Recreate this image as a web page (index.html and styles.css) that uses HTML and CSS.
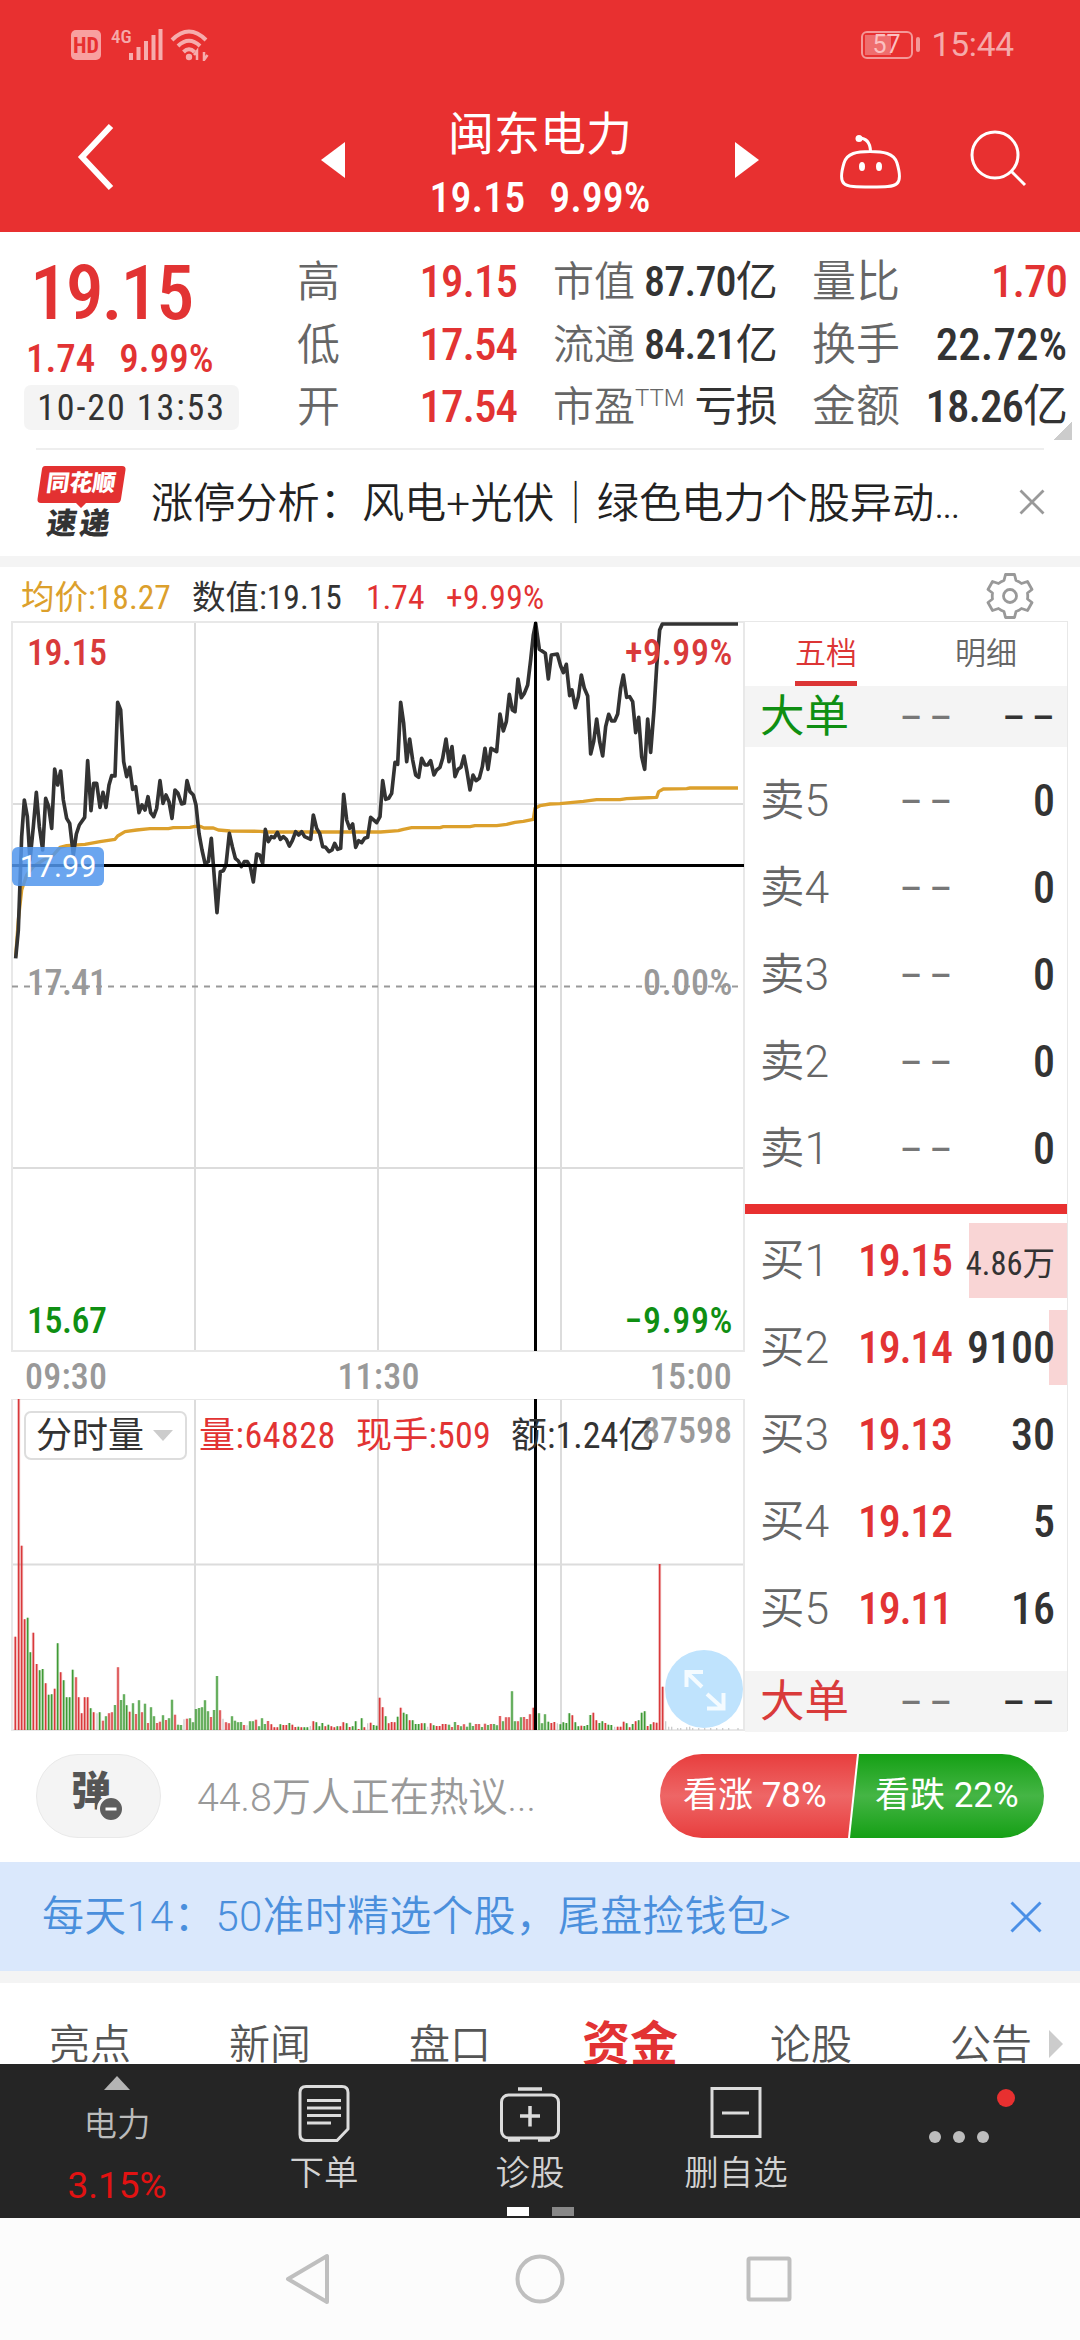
FILE: index.html
```
<!DOCTYPE html>
<html lang="zh-CN">
<head>
<meta charset="utf-8">
<title>闽东电力</title>
<link rel="stylesheet" href="styles.css">
</head>
<body>
<div class="screen">

<header class="header">
  <div class="status">
    <div class="status-left">
      <span class="hd">HD</span>
      <span class="net">4G</span>
      <svg class="signal" width="34" height="32" viewBox="0 0 34 32"><path d="M2 32V25M9.500 32V19M17 32V13M24.500 32V7M31.500 32V1" stroke="currentColor" stroke-width="4"/></svg>
      <svg class="wifi" width="40" height="32" viewBox="0 0 40 32" fill="none" stroke="currentColor" stroke-width="4"><path d="M2 11Q19 -6 36 11M8 17Q19 6.500 30 17M13.500 23Q19 17.500 24.500 23"/><circle cx="19" cy="28" r="3.200" fill="currentColor" stroke="none"/><path d="M27 31v-9l-3 4M34 23v8l3.500-5" stroke-width="2.500"/></svg>
    </div>
    <div class="status-right">
      <span class="battery"><span class="battery-fill"></span><span class="battery-text">57</span></span><span class="battery-cap"></span>
      <span class="clock">15:44</span>
    </div>
  </div>
  <div class="titlebar">
    <svg class="back" width="40" height="74" viewBox="0 0 40 74" fill="none" stroke="#fff" stroke-width="6"><path d="M35 6L6 37L35 68"/></svg>
    <svg class="tri-l" width="24" height="36" viewBox="0 0 24 36"><path d="M24 0V36L0 18z" fill="#fff"/></svg>
    <div class="title">
      <div class="name">闽东电力</div>
      <div class="sub"><span>19.15</span><span>9.99%</span></div>
    </div>
    <svg class="tri-r" width="24" height="36" viewBox="0 0 24 36"><path d="M0 0V36L24 18z" fill="#fff"/></svg>
    <svg class="robot" width="64" height="56" viewBox="0 0 64 56" fill="none" stroke="#fff" stroke-width="3"><path d="M20 5C27 5 31 9 31.500 18M31 18.500C44 18.500 55 20 58 30C61 40 62 47 58 50.500C54 54 46 54 32 54C18 54 8 54 5 50.500C1 47 2 40 5 30C8 20 18 18.500 31 18.500z"/><circle cx="20" cy="5.500" r="3.500" fill="#fff" stroke="none"/><ellipse cx="23" cy="33.500" rx="3" ry="4.500" fill="#fff" stroke="none"/><ellipse cx="40" cy="33.500" rx="3" ry="4.500" fill="#fff" stroke="none"/></svg>
    <svg class="search" width="58" height="58" viewBox="0 0 58 58" fill="none" stroke="#fff" stroke-width="3"><circle cx="25" cy="25" r="23"/><path d="M41 41L55 55"/></svg>
  </div>
</header>

<section class="quote">
  <div class="q-main">
    <div class="price">19.15</div>
    <div class="change"><span>1.74</span><span>9.99%</span></div>
    <div class="stamp">10-20 13:53</div>
  </div>
  <dl class="stats stats-a">
    <div><dt>高</dt><dd class="up">19.15</dd></div>
    <div><dt>低</dt><dd class="up">17.54</dd></div>
    <div><dt>开</dt><dd class="up">17.54</dd></div>
  </dl>
  <dl class="stats stats-b">
    <div><dt>市值</dt><dd>87.70<em>亿</em></dd></div>
    <div><dt>流通</dt><dd>84.21<em>亿</em></dd></div>
    <div><dt>市盈<sup>TTM</sup></dt><dd><em>亏损</em></dd></div>
  </dl>
  <dl class="stats stats-c">
    <div><dt>量比</dt><dd class="up">1.70</dd></div>
    <div><dt>换手</dt><dd class="ratio">22.72%</dd></div>
    <div><dt>金额</dt><dd>18.26<em>亿</em></dd></div>
  </dl>
  <span class="corner"></span>
</section>

<section class="news">
  <div class="logo">
    <svg class="logo-bg" width="90" height="45" viewBox="0 0 90 45"><path d="M8 0H85Q89 0 88.500 4L84 33Q83.500 37 80 37H49L44 42L39 37H4Q0 37 .5 33L5 3Q5.500 0 8 0z" fill="#e33131"/></svg>
    <span class="logo-top">同花顺</span>
    <span class="logo-bottom">速递</span>
  </div>
  <p class="news-text">涨停分析：风电+光伏｜绿色电力个股异动<span class="dots">...</span></p>
  <svg class="news-close" width="26" height="26" viewBox="0 0 26 26" stroke="#999" stroke-width="2.800"><path d="M1.500 1.500L24.500 24.500M24.500 1.500L1.500 24.500"/></svg>
</section>

<section class="market">
  <div class="legend">
    <span class="avg">均价:18.27</span><span class="val">数值:19.15</span><span class="up chg">1.74</span><span class="up pct">+9.99%</span>
    <svg class="gear" width="48" height="48" viewBox="-24 -24 48 48" fill="none" stroke="#999" stroke-width="2.800" stroke-linejoin="round"><path d="M-4.500 -21.500H4.500L6 -15.500Q9 -14.500 11.500 -12.500L17.500 -14.500L22 -6.500L17.500 -3Q18 0 17.500 3L22 6.500L17.500 14.500L11.500 12.500Q9 14.500 6 15.500L4.500 21.500H-4.500L-6 15.500Q-9 14.500 -11.500 12.500L-17.500 14.500L-22 6.500L-17.500 3Q-18 0 -17.500 -3L-22 -6.500L-17.500 -14.500L-11.500 -12.500Q-9 -14.500 -6 -15.500z"/><circle r="6.500"/></svg>
  </div>
  <div class="panels">
    <div class="charts">
      <div class="chart price-chart">
        <svg width="734" height="731" viewBox="11 621 734 731">
          <path d="M195 621V1351M378 621V1351M561 621V1351M12 804H744M12 1168H744" stroke="#dcdcdc" stroke-width="2"/>
          <path d="M12 622H744V1351H12z" fill="none" stroke="#e8e8e8" stroke-width="2"/>
          <path d="M12 986.500H738" stroke="#999" stroke-width="1.800" stroke-dasharray="6 6"/>
          <g transform="translate(0 560) scale(.33333)" fill="none" stroke-linejoin="round">
            <polyline stroke="#dca02c" stroke-width="10" points="47,1190 55,1080 65,990 80,945 100,920 130,900 160,885 180,862 200,857 255,853 300,845 345,838 353,828 375,815 410,810 450,806 505,806 520,803 570,802 585,799 600,799 612,804 640,804 655,810 690,813 780,814 800,816 1142,816 1195,812 1210,808 1235,803 1320,803 1330,800 1410,800 1425,797 1490,797 1520,793 1545,787 1570,784 1600,778 1605,745 1620,737 1650,732 1680,731 1750,724 1790,719 1860,719 1880,716 1925,714 1970,712 1976,695 1990,687 2060,686 2070,684 2214,684"/>
            <polyline stroke="#333" stroke-width="11" points="47,1195 55,1110 65,830 73,720 82,770 90,900 100,800 109,697 118,800 128,870 137,715 146,740 155,805 164,627 173,675 182,633 190,720 200,775 209,790 220,885 229,822 238,795 254,772 263,602 273,752 281,670 290,670 300,742 309,697 318,742 327,675 335,647 345,648 353,427 362,450 371,605 380,650 389,622 398,688 407,680 417,758 426,735 435,750 444,710 452,758 461,770 470,745 480,662 489,730 498,705 507,725 516,775 525,690 534,700 545,732 553,730 561,662 570,695 580,705 588,735 597,820 606,870 615,910 625,905 634,835 651,1058 661,935 670,932 678,915 688,820 697,860 706,895 715,903 724,920 733,905 742,905 751,920 760,966 770,882 779,885 788,910 796,808 805,845 814,830 823,833 832,817 841,838 850,830 859,838 868,858 877,842 887,815 896,825 905,815 914,830 932,838 940,765 950,805 959,820 968,860 977,862 987,875 996,870 1004,850 1013,868 1022,865 1031,703 1040,780 1049,805 1058,792 1067,862 1076,842 1085,848 1094,835 1103,832 1112,772 1130,788 1140,770 1148,662 1157,718 1166,715 1175,700 1185,607 1193,613 1202,427 1211,490 1220,605 1229,537 1238,600 1247,645 1256,652 1265,595 1275,615 1283,615 1292,602 1302,645 1310,630 1320,622 1328,595 1338,537 1347,605 1356,560 1365,650 1374,628 1383,622 1392,588 1401,635 1410,690 1419,645 1428,662 1438,655 1447,620 1455,565 1464,628 1473,565 1490,575 1500,462 1510,513 1519,485 1528,403 1537,450 1545,455 1554,357 1564,413 1573,400 1583,375 1592,300 1600,225 1607,190 1618,268 1636,280 1645,357 1654,285 1672,282 1682,318 1690,338 1699,313 1709,407 1716,390 1726,443 1735,410 1744,345 1753,385 1763,408 1772,582 1781,545 1790,477 1799,545 1808,588 1817,500 1826,463 1835,483 1844,483 1853,462 1862,385 1870,345 1880,412 1889,410 1898,425 1907,518 1916,472 1925,590 1934,628 1943,477 1952,577 1962,450 1970,320 1979,210 1987,192 2214,192"/>
          </g>
          <path d="M12 865.500H744M535.500 622V1351" stroke="#000" stroke-width="3"/>
        </svg>
        <span class="mark m-tl up">19.15</span><span class="mark m-tr up">+9.99%</span>
        <span class="mark m-ml">17.41</span><span class="mark m-mr">0.00%</span>
        <span class="mark m-bl down">15.67</span><span class="mark m-br down">−9.99%</span>
        <span class="tag">17.99</span>
      </div>
      <div class="axis"><span>09:30</span><span>11:30</span><span>15:00</span></div>
      <div class="chart volume-chart">
        <svg width="734" height="332" viewBox="11 1399 734 332">
          <path d="M195 1399V1730M378 1399V1730M561 1399V1730M12 1564.500H744" stroke="#dcdcdc" stroke-width="2"/>
          <path d="M12 1399H744V1730H12z" fill="none" stroke="#e8e8e8" stroke-width="2"/>
          <g transform="translate(0 1280) scale(.33333)" stroke-width="4">
            <g stroke="#ccc"><path d="M291 1350V1300M552 1350V1318M669 1350V1316M741 1350V1336M931 1350V1338M1103 1350V1330M1283 1350V1340M1672 1350V1330M1844 1350V1340M1997 1350V1324M2006 1350V1340M2015 1350V1340M2033 1350V1344M2042 1350V1344M2060 1350V1342M2069 1350V1340M2078 1350V1344M2096 1350V1344M2114 1350V1344M2132 1350V1344M2150 1350V1344M2168 1350V1344M2186 1350V1344M2214 1350V1344"/></g>
            <path id="vr" stroke="#d9393b" d="M46 1350V1070M56 1350V357M65 1350V797M74 1350V1018M100 1350V1058M110 1350V1152M137 1350V1210M164 1350V1226M182 1350V1177M228 1350V1192M236 1350V1252M245 1350V1300M254 1350V1252M263 1350V1252M281 1350V1297M309 1350V1322M327 1350V1300M336 1350V1297M354 1350V1162M389 1350V1295M408 1350V1302M426 1350V1297M444 1350V1329M471 1350V1329M480 1350V1325M498 1350V1320M525 1350V1304M561 1350V1316M633 1350V1311M660 1350V1291M678 1350V1327M687 1350V1330M732 1350V1335M768 1350V1319M804 1350V1323M814 1350V1333M823 1350V1342M832 1350V1342M850 1350V1335M859 1350V1335M877 1350V1334M886 1350V1341M904 1350V1342M940 1350V1324M976 1350V1339M994 1350V1339M1003 1350V1342M1021 1350V1339M1030 1350V1327M1049 1350V1341M1076 1350V1347M1093 1350V1342M1112 1350V1328M1139 1350V1253M1148 1350V1282M1166 1350V1330M1175 1350V1326M1184 1350V1327M1202 1350V1283M1229 1350V1321M1265 1350V1330M1292 1350V1330M1310 1350V1338M1319 1350V1338M1328 1350V1332M1337 1350V1332M1356 1350V1341M1374 1350V1335M1392 1350V1333M1428 1350V1332M1437 1350V1332M1455 1350V1331M1473 1350V1332M1500 1350V1308M1518 1350V1312M1527 1350V1312M1554 1350V1324M1572 1350V1311M1581 1350V1317M1590 1350V1303M1600 1350V1283M1654 1350V1329M1663 1350V1326M1717 1350V1306M1744 1350V1337M1780 1350V1298M1789 1350V1321M1816 1350V1329M1853 1350V1340M1862 1350V1340M1871 1350V1325M1889 1350V1342M1907 1350V1324M1943 1350V1338M1961 1350V1327M1970 1350V1328M1979 1350V852M1988 1350V1220"/>
            <path id="vg" stroke="#3f9a35" d="M83 1350V1013M91 1350V1117M119 1350V1171M128 1350V1167M146 1350V1244M155 1350V1243M173 1350V1090M191 1350V1201M200 1350V1252M209 1350V1252M218 1350V1169M272 1350V1285M299 1350V1297M318 1350V1309M345 1350V1275M363 1350V1260M372 1350V1243M380 1350V1276M399 1350V1270M417 1350V1261M435 1350V1271M453 1350V1282M462 1350V1309M489 1350V1306M507 1350V1315M516 1350V1259M534 1350V1334M543 1350V1335M570 1350V1315M579 1350V1327M588 1350V1287M597 1350V1284M606 1350V1282M615 1350V1261M624 1350V1294M642 1350V1290M651 1350V1188M696 1350V1309M705 1350V1322M714 1350V1327M723 1350V1326M750 1350V1324M759 1350V1324M777 1350V1339M786 1350V1315M795 1350V1332M841 1350V1333M868 1350V1329M895 1350V1340M913 1350V1342M922 1350V1342M949 1350V1327M958 1350V1339M967 1350V1329M985 1350V1334M1012 1350V1339M1040 1350V1330M1058 1350V1339M1067 1350V1324M1085 1350V1315M1121 1350V1335M1130 1350V1337M1157 1350V1309M1193 1350V1310M1211 1350V1298M1220 1350V1303M1238 1350V1321M1247 1350V1332M1256 1350V1332M1274 1350V1330M1301 1350V1336M1347 1350V1334M1365 1350V1326M1383 1350V1339M1401 1350V1340M1410 1350V1328M1419 1350V1338M1446 1350V1341M1464 1350V1335M1482 1350V1332M1491 1350V1336M1509 1350V1324M1536 1350V1234M1545 1350V1324M1563 1350V1312M1617 1350V1300M1626 1350V1330M1635 1350V1303M1645 1350V1325M1681 1350V1333M1690 1350V1327M1699 1350V1329M1708 1350V1300M1726 1350V1327M1735 1350V1339M1753 1350V1338M1762 1350V1335M1771 1350V1305M1798 1350V1329M1807 1350V1324M1825 1350V1334M1834 1350V1335M1880 1350V1330M1898 1350V1332M1916 1350V1321M1925 1350V1298M1934 1350V1294M1952 1350V1333"/>
            <g stroke-width="9" opacity=".35"><use href="#vr"/><use href="#vg"/></g>
          </g>
          <path d="M535.500 1399V1730" stroke="#000" stroke-width="3"/>
        </svg>
        <span class="mark v-max">87598</span>
        <div class="vol-legend">
          <span class="picker">分时量<i></i></span>
          <span class="up v1">量:64828</span><span class="up v2">现手:509</span><span class="v3">额:1.24亿</span>
        </div>
        <svg class="expand" width="78" height="78" viewBox="0 0 78 78" fill="none"><circle cx="39" cy="39" r="39" fill="#bfe3fd"/><path d="M37 37L22 22.500M21.500 37V22H38M42 44L58 58.500M58.500 43V58.500H42" stroke="#f4fbff" stroke-width="4"/></svg>
      </div>
    </div>
    <div class="book">
      <div class="book-tabs"><span class="on">五档</span><span>明细</span></div>
      <div class="big big-sell"><span class="lab">大单</span><span class="pr none">––</span><span class="qt none">––</span></div>
      <div class="levels sells">
        <div class="lv"><span class="lab">卖5</span><span class="pr none">––</span><span class="qt">0</span></div>
        <div class="lv"><span class="lab">卖4</span><span class="pr none">––</span><span class="qt">0</span></div>
        <div class="lv"><span class="lab">卖3</span><span class="pr none">––</span><span class="qt">0</span></div>
        <div class="lv"><span class="lab">卖2</span><span class="pr none">––</span><span class="qt">0</span></div>
        <div class="lv"><span class="lab">卖1</span><span class="pr none">––</span><span class="qt">0</span></div>
      </div>
      <div class="split"></div>
      <div class="levels buys">
        <div class="lv depth-1"><span class="lab">买1</span><span class="pr up">19.15</span><span class="qt small">4.86万</span></div>
        <div class="lv depth-2"><span class="lab">买2</span><span class="pr up">19.14</span><span class="qt">9100</span></div>
        <div class="lv"><span class="lab">买3</span><span class="pr up">19.13</span><span class="qt">30</span></div>
        <div class="lv"><span class="lab">买4</span><span class="pr up">19.12</span><span class="qt">5</span></div>
        <div class="lv"><span class="lab">买5</span><span class="pr up">19.11</span><span class="qt">16</span></div>
      </div>
      <div class="big big-buy"><span class="lab">大单</span><span class="pr none">––</span><span class="qt none">––</span></div>
    </div>
  </div>
</section>

<section class="talk">
  <div class="danmu"><span>弹</span><svg width="28" height="28" viewBox="0 0 28 28"><circle cx="14" cy="14" r="12.500" fill="#5e5e5e" stroke="#f4f4f4" stroke-width="3"/><path d="M8.500 14H19.500" stroke="#fff" stroke-width="3"/></svg></div>
  <p class="talk-text">44.8万人正在热议...</p>
  <div class="vote"><span class="vote-up">看涨 78%</span><span class="vote-down">看跌 22%</span></div>
</section>

<section class="banner">
  <p>每天14：50准时精选个股，尾盘捡钱包&gt;</p>
  <svg width="32" height="32" viewBox="0 0 32 32" stroke="#4a8fe6" stroke-width="3"><path d="M1.500 1.500L30.500 30.500M30.500 1.500L1.500 30.500"/></svg>
</section>

<nav class="tabs">
  <span>亮点</span><span>新闻</span><span>盘口</span><span class="on">资金</span><span>论股</span><span>公告</span>
  <svg width="15" height="28" viewBox="0 0 15 28"><path d="M1 0V28L15 14z" fill="#ccc"/></svg>
</nav>

<footer class="toolbar">
  <div class="tool t1"><svg width="26" height="14" viewBox="0 0 26 14"><path d="M13 0L26 14H0z" fill="#b4b4b4"/></svg><span>电力</span><b>3.15%</b></div>
  <div class="tool"><svg width="54" height="60" viewBox="0 0 54 60" fill="none" stroke="#dcdcdc" stroke-width="3"><path d="M9 3.500H45Q51 3.500 51 9.500V46L40 57.500H9Q3 57.500 3 51.500V9.500Q3 3.500 9 3.500zM10 17.500H44M10 25H44M10 32.500H44M10 40H34"/></svg><span>下单</span></div>
  <div class="tool"><svg width="60" height="60" viewBox="0 0 60 60" fill="none" stroke="#dcdcdc" stroke-width="3"><rect x="1.500" y="12" width="57" height="43" rx="7"/><path d="M18 6H42M8 57H20M38 57H50M20 33H40M30 23V43.500" stroke-width="3.500"/></svg><span>诊股</span></div>
  <div class="tool"><svg width="54" height="60" viewBox="0 0 54 60" fill="none" stroke="#dcdcdc" stroke-width="3"><rect x="3" y="5.500" width="48" height="48"/><path d="M13 30H40"/></svg><span>删自选</span></div>
  <div class="tool more"><svg width="84" height="60" viewBox="0 0 84 60"><circle cx="20" cy="54" r="6" fill="#bdbdbd"/><circle cx="44" cy="54" r="6" fill="#bdbdbd"/><circle cx="68" cy="54" r="6" fill="#bdbdbd"/></svg><i></i></div>
  <div class="pager"><i class="on"></i><i></i></div>
</footer>

<div class="navbar">
  <svg width="48" height="56" viewBox="0 0 48 56" fill="none" stroke="#bfbfbf" stroke-width="4" stroke-linejoin="round"><path d="M43 5V51L4 28z"/></svg>
  <svg width="50" height="50" viewBox="0 0 50 50" fill="none" stroke="#bfbfbf" stroke-width="4"><circle cx="25" cy="25" r="22.500"/></svg>
  <svg width="46" height="46" viewBox="0 0 46 46" fill="none" stroke="#bfbfbf" stroke-width="4"><rect x="2.500" y="2.500" width="41" height="41" rx="1.500"/></svg>
</div>
</div>
</body>
</html>
```
FILE: styles.css
```
* { box-sizing: border-box; margin: 0; padding: 0; }
body {
  width: 1080px;
  background: #fff;
  color: #333;
  font-family: "Roboto", "Noto Sans CJK SC", sans-serif;
}
.screen { display: flex; flex-direction: column; width: 1080px; height: 2340px; overflow: hidden; }
svg { display: block; flex: none; }
i, b, em { font-style: normal; font-weight: 400; }
.up { color: #e23333; }
.down { color: #0f8f12; }

/* header */
.header { height: 232px; background: #e83030; color: #fff; }
.status { display: flex; justify-content: space-between; height: 88px; padding: 29px 66px 0 71px; color: rgba(255, 255, 255, .6); }
.status-left, .status-right { display: flex; align-items: flex-start; }
.hd { width: 30px; height: 30px; margin-top: 1px; border-radius: 5px; background: #f8a0a0; color: #e83030; font: 700 22px/31px "Roboto Condensed", sans-serif; text-align: center; }
.net { width: 18px; margin-left: 10px; font: 500 19px/16px "Roboto Condensed", sans-serif; }
.signal { margin: -1px 0 0 0; }
.wifi { margin: 0 0 0 7px; }
.battery { position: relative; width: 52px; height: 28px; margin-top: 2px; border: 2px solid rgba(255, 255, 255, .5); border-radius: 6px; text-align: center; }
.battery-fill { position: absolute; left: 2px; top: 2px; width: 26px; height: 20px; background: rgba(255, 255, 255, .3); }
.battery-text { position: relative; font: 400 25px/24px "Roboto", sans-serif; color: #fbc0c0; display: block; }
.battery-cap { width: 4px; height: 15px; margin: 8px 12px 0 3px; background: rgba(255, 255, 255, .5); border-radius: 2px; }
.clock { font-size: 33.500px; line-height: 32px; letter-spacing: -.2px; }

.titlebar { display: flex; align-items: flex-start; height: 144px; }
.back { margin: 32px 0 0 76px; }
.tri-l { margin: 54px 0 0 205px; }
.title { width: 390px; padding-top: 16px; text-align: center; }
.name { font-size: 46px; line-height: 60px; }
.sub { display: flex; justify-content: center; gap: 24px; margin-top: 9px; font: 500 42px/50px "Roboto Condensed", sans-serif; }
.tri-r { margin-top: 54px; }
.robot { margin: 45px 0 0 80px; }
.search { margin: 42px 0 0 67px; }

/* quote */
.quote { position: relative; display: flex; height: 216px; padding-top: 19px; font-family: "Roboto Condensed", "Noto Sans CJK SC", sans-serif; }
.q-main { width: 297px; padding-left: 24px; color: #e23333; font-weight: 500; }
.price { padding-left: 6px; margin-top: 7px; font-size: 76px; line-height: 70px; letter-spacing: -2.200px; }
.change { display: flex; gap: 24px; padding-left: 2px; margin-top: 8px; font-size: 39px; line-height: 46px; }
.stamp { width: 215px; height: 45px; margin-top: 3px; border-radius: 7px; background: #f4f4f4; color: #333; font-size: 36px; line-height: 46px; letter-spacing: 1.900px; text-align: center; font-weight: 450; }
.stats > div { display: flex; justify-content: space-between; height: 62.500px; line-height: 62px; white-space: nowrap; }
.stats dt { color: #666; font-weight: 350; }
.stats dd { font-weight: 500; font-size: 45px; letter-spacing: -1px; }
.stats dd.ratio { letter-spacing: 0; }
.stats em { font-weight: 400; }
.stats-a { width: 220px; font-size: 43px; }
.stats-b { width: 224px; margin-left: 36px; font-size: 41px; }
.stats-b dd { font-size: 42px; letter-spacing: -.800px; }
.stats-c { width: 255px; margin-left: 35px; font-size: 44px; }
.stats sup { display: inline-block; vertical-align: top; font: 300 24px/44px "Roboto", sans-serif; }
.corner { position: absolute; right: 8px; bottom: 8px; width: 18px; height: 18px; background: linear-gradient(135deg, transparent 50%, #ccc 50%); }

/* news */
.news { display: flex; align-items: flex-start; height: 108px; margin: 0 36px; border-top: 2px solid #eee; }
.logo { position: relative; width: 90px; height: 76px; margin-top: 16px; }
.logo-bg { position: absolute; left: 1px; top: 0; }
.logo-top, .logo-bottom { position: relative; display: block; transform: skewX(-8deg); font-weight: 900; text-align: center; }
.logo-top { color: #fff; font-size: 23px; line-height: 36px; }
.logo-bottom { margin-top: 7px; padding-right: 2px; font-size: 30px; line-height: 30px; letter-spacing: 3px; }
.news-text { padding-left: 25px; font-size: 42.200px; line-height: 108px; font-weight: 350; white-space: nowrap; color: #222; }
.dots { letter-spacing: -2px; }
.news-close { margin: 39px -1px 0 auto; }

/* market */
.market { border-top: 11px solid #f4f4f4; }
.legend { display: flex; height: 54px; padding-left: 21px; font: 400 33.500px/61px "Roboto Condensed", "Noto Sans CJK SC", sans-serif; white-space: nowrap; position: relative; }
.avg { width: 171px; color: #dca02c; }
.val { width: 174px; }
.chg { width: 80px; font-weight: 450; }
.pct { width: 540px; font-weight: 450; letter-spacing: .400px; }
.gear { margin-top: 5px; }
.panels { display: flex; height: 1110px; padding-left: 11px; }
.charts { width: 734px; }
.chart { position: relative; }
.price-chart { height: 731px; }
.mark { position: absolute; font: 470 36px/36px "Roboto Condensed", sans-serif; color: #999; white-space: nowrap; }
.mark.up { color: #d93a3a; }
.mark.down { color: #0f8f12; }
.m-tl, .m-ml, .m-bl { left: 16px; letter-spacing: -.500px; }
.m-tr, .m-mr, .m-br { right: 12px; letter-spacing: .600px; }
.m-tl, .m-tr { top: 14px; }
.m-ml, .m-mr { top: 344px; }
.m-bl, .m-br { top: 682px; }
.tag { position: absolute; left: 1px; top: 226px; width: 92px; height: 39px; border-radius: 6px; background: rgba(82, 150, 236, .86); color: #fff; font-size: 30.500px; line-height: 39px; text-align: center; }
.axis { display: flex; justify-content: space-between; height: 47px; padding: 0 13px 0 14px; font: 470 36px/50px "Roboto Condensed", sans-serif; letter-spacing: .200px; color: #999; }
.volume-chart { height: 332px; }
.v-max { right: 13px; top: 14px; }
.vol-legend { position: absolute; left: 13px; top: 12px; display: flex; font: 400 36px/50px "Roboto Condensed", "Noto Sans CJK SC", sans-serif; white-space: nowrap; }
.picker { display: flex; align-items: center; width: 163px; height: 49px; padding-left: 10px; border: 2px solid #ddd; border-radius: 7px; background: #fff; }
.picker i { margin-left: 9px; border: 10px solid transparent; border-top: 11px solid #ccc; border-bottom: 0; }
.vol-legend .v1 { width: 157px; margin-left: 12px; letter-spacing: .500px; }
.vol-legend .v2 { width: 155px; letter-spacing: .200px; }
.expand { position: absolute; right: 2px; bottom: 3px; }

/* order book */
.book { width: 323px; border: 1px solid #e8e8e8; border-left: 0; font-family: "Roboto Condensed", "Noto Sans CJK SC", sans-serif; }
.book-tabs { display: flex; height: 64px; padding: 0 50px; justify-content: space-between; font-size: 31px; line-height: 63px; color: #666; font-weight: 350; }
.book-tabs .on { height: 64px; border-bottom: 5px solid #dc3535; color: #dc3535; }
.book-tabs span { height: 64px; }
.big, .lv { display: flex; align-items: center; padding: 0 12px 0 15px; white-space: nowrap; }
.big { height: 61px; background: #f4f4f4; }
.lab { width: 98px; font: 350 44.500px/60px "Roboto", "Noto Sans CJK SC", sans-serif; color: #666; }
.big-sell .lab { color: #0f8f12; font-weight: 400; }
.big-buy .lab { color: #d93a3a; font-weight: 400; }
.pr { width: 94px; font-size: 44px; letter-spacing: -1.300px; font-weight: 500; text-align: left; }
.qt { flex: 1; font-size: 44px; font-weight: 500; text-align: right; }
.none { font: 500 34px/40px "Roboto", sans-serif; letter-spacing: 8px; color: #777; }
.pr.none { margin-right: 0; padding-left: 42px; }
.qt.none { color: #333; font-weight: 600; margin-right: -7px; }
.qt.small { font-size: 32.500px; font-weight: 400; }
.levels { height: 457px; }
.sells { padding-top: 10px; }
.buys { padding-top: 3px; }
.lv { height: 87px; }
.split { height: 10px; background: #e83030; }
.depth-1, .depth-2 { background: linear-gradient(#f9d5d5, #f9d5d5) no-repeat right center / 98px 75px; }
.depth-2 { background-size: 18px 75px; }

/* discussion */
.talk { display: flex; align-items: flex-start; height: 131px; padding: 23px 36px 0; }
.danmu { position: relative; width: 125px; height: 84px; border: 1px solid #e9e9e9; border-radius: 42px; background: #f4f4f4; }
.danmu span { display: block; padding-left: 34px; font-size: 40px; font-weight: 900; line-height: 74px; color: #555; }
.danmu svg { position: absolute; left: 60px; top: 40px; }
.talk-text { width: 499px; padding-left: 36px; font-size: 39.300px; line-height: 88px; color: #999; font-weight: 350; }
.vote { display: grid; grid-template-columns: 197px 196px; width: 384px; height: 84px; border-radius: 42px; overflow: hidden; color: #fff; font: 400 35px/84px "Roboto", "Noto Sans CJK SC", sans-serif; }
.vote span { white-space: nowrap; }
.vote-up { padding-left: 23px; background: linear-gradient(#e83e3e, #ee6666 50%, #e83e3e); clip-path: polygon(0 0, 100% 0, 188px 100%, 0 100%); }
.vote-down { margin-left: -7px; padding-left: 25px; background: linear-gradient(#15a015, #45b545 50%, #15a015); clip-path: polygon(9px 0, 100% 0, 100% 100%, 0 100%); }

/* banner */
.banner { display: flex; justify-content: space-between; align-items: center; height: 109px; padding: 0 38px 0 42px; background: #dae8fc; color: #4a8fdc; }
.banner p { font-size: 42px; line-height: 112px; font-weight: 350; letter-spacing: .200px; white-space: nowrap; }

/* content tabs */
.tabs { display: flex; align-items: flex-start; height: 93px; border-top: 12px solid #f4f4f4; font-size: 41px; line-height: 38px; font-weight: 350; color: #555; padding: 43px 0 0 49px; }
.tabs span { width: 180px; flex: none; }
.tabs .on { margin-left: -7px; width: 188px; color: #e23333; font-size: 48px; font-weight: 700; }
.tabs span:nth-of-type(6) { width: 98px; }
.tabs svg { margin-top: 4px; }

/* toolbar */
.toolbar { position: relative; display: flex; height: 154px; padding-left: 15px; background: #252525; color: #d2d2d2; font-size: 34.500px; font-weight: 350; }
.tool { display: flex; flex-direction: column; align-items: center; width: 206px; padding-top: 19px; line-height: 52px; }
.tool span { margin-top: 4px; }
.t1 { padding: 12px 0 0; margin-left: -1px; margin-right: 1px; font-size: 33.500px; color: #bbb; }
.t1 span { margin-top: 9px; }
.t1 b { margin-top: 12px; font-size: 37px; line-height: 46px; color: #e21212; }
.more { position: relative; left: 15px; }
.more i { position: absolute; right: 45px; top: 25px; width: 18px; height: 18px; border-radius: 50%; background: #e83030; }
.pager { position: absolute; left: 507px; bottom: 2px; display: flex; gap: 23px; }
.pager i { width: 22px; height: 9px; background: #888; }
.pager .on { background: #fff; }

/* system navigation */
.navbar { display: flex; align-items: center; height: 122px; padding-left: 284px; background: #fcfcfc; }
.navbar svg:nth-child(1) { margin-right: 183px; }
.navbar svg:nth-child(2) { margin-right: 181px; }
```
